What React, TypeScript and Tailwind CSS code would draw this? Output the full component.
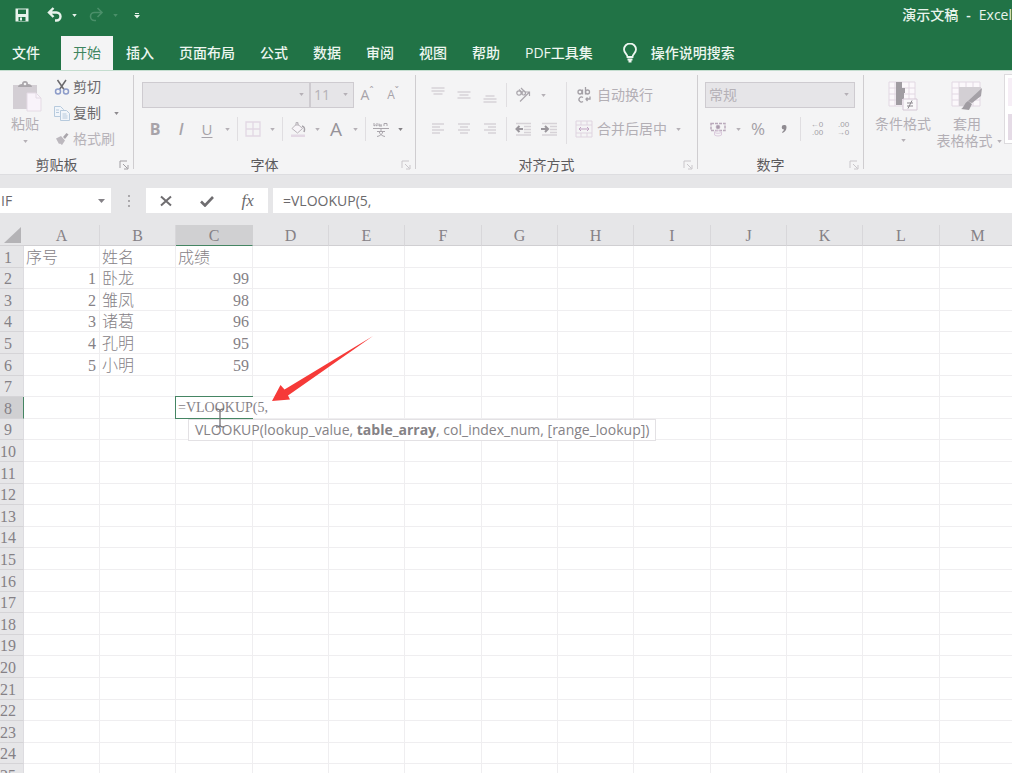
import React, { useState } from 'react';
import clsx from 'clsx';

const TABS = ['开始', '插入', '页面布局', '公式', '数据', '审阅', '视图', '帮助', 'PDF工具集'];
const COLUMNS = 'ABCDEFGHIJKLM'.split('');
const ROWS = Array.from({ length: 25 }, (_, i) => i + 1);

const DATA: Record<number, string[]> = {
    1: ['序号', '姓名', '成绩'],
    2: ['1', '卧龙', '99'],
    3: ['2', '雏凤', '98'],
    4: ['3', '诸葛', '96'],
    5: ['4', '孔明', '95'],
    6: ['5', '小明', '59'],
};

const ACTIVE_ROW = 8;
const ACTIVE_COL = 'C';

function Caret({ className = 'text-[#b5b0b6]' }: { className?: string }) {
    return (
        <svg viewBox="0 0 6 4" className={clsx('h-[3px] w-[5px] shrink-0', className)} fill="currentColor">
            <path d="M0 0h6L3 4z" />
        </svg>
    );
}

function Drop({ label, className }: { label: string; className?: string }) {
    return (
        <button aria-label={label} className="flex h-[26px] w-[14px] items-center justify-center">
            <Caret className={className} />
        </button>
    );
}

function Tool({ label, wide = true, children }: { label: string; wide?: boolean; children: React.ReactNode }) {
    return (
        <button aria-label={label} className={clsx('flex h-[26px] items-center justify-center', wide ? 'w-[26px]' : 'w-6')}>
            {children}
        </button>
    );
}

function Divider() {
    return <div className="mx-[3px] h-6 w-px bg-[#e0dee1]" />;
}

function Icon({ children, className = 'size-4 text-[#b9b4ba]', box = '0 0 16 16' }: { children: React.ReactNode; className?: string; box?: string }) {
    return (
        <svg viewBox={box} className={className} fill="none" stroke="currentColor" strokeWidth="1.3">
            {children}
        </svg>
    );
}

function Group({ name, width, dim, children }: { name: string; width: string; dim?: boolean; children: React.ReactNode }) {
    return (
        <section className={clsx('flex shrink-0 flex-col', width)}>
            <div className="h-[78px]">{children}</div>
            <div className="flex h-[22px] items-end">
                <h2 className="flex-1 pr-[6px] text-center leading-[18px] text-[#5c5a5d]">{name}</h2>
                <button aria-label={`${name}设置`} className="flex h-[18px] w-[14px] items-center">
                    <Icon className={clsx('size-[10px]', dim ? 'text-[#c9c6ca]' : 'text-[#a19ea2]')} box="0 0 10 10">
                        <path d="M1 8V1h7M4 4l4.500 4.500M9 5v4H5" strokeWidth="1" />
                    </Icon>
                </button>
            </div>
        </section>
    );
}

function GroupEdge() {
    return <div className="mt-px h-[94px] w-px shrink-0 bg-[#cfcdd0]" />;
}

function Combo({ label, value, width }: { label: string; value: string; width: string }) {
    return (
        <div className={clsx('relative', width)}>
            <select
                aria-label={label}
                defaultValue={value}
                className="block h-[26px] w-full appearance-none border border-[#cecbd0] bg-[#e6e5e8] pl-[3px] text-[14px] text-[#b5b1b7] outline-none"
            >
                <option>{value}</option>
            </select>
            <span className="pointer-events-none absolute top-[11px] right-[6px]">
                <Caret />
            </span>
        </div>
    );
}

function TitleBar() {
    return (
        <header className="flex h-[30px] items-center bg-[#217346] pl-[14px] text-[#e8f3ec]">
            <button aria-label="保存">
                <svg viewBox="0 0 16 16" className="size-4">
                    <path d="M1.500 1.500h13v13h-13z" fill="currentColor" />
                    <path d="M4 2.500h8v4.500H4zM4.500 10h7v4h-7z" fill="#217346" />
                    <path d="M6 10.500h2v3H6z" fill="currentColor" />
                </svg>
            </button>
            <button aria-label="撤消" className="ml-[17px]">
                <svg viewBox="0 0 16 16" className="size-4" fill="none" stroke="currentColor" strokeWidth="2.400">
                    <path d="M6.500 1 2 5.500 6.500 10M2.500 5.500h7a4 4 0 0 1 0 8H8" />
                </svg>
            </button>
            <span className="ml-1"><Drop label="撤消列表" className="text-[#e8f3ec]" /></span>
            <button aria-label="恢复" className="ml-[7px]">
                <svg viewBox="0 0 16 16" className="size-4 text-[#4a8f69]" fill="none" stroke="currentColor" strokeWidth="1.600">
                    <path d="M9.500 1 14 5.500 9.500 10M13.500 5.500h-7a4 4 0 0 0 0 8H8" />
                </svg>
            </button>
            <span className="ml-1"><Drop label="恢复列表" className="text-[#4a8f69]" /></span>
            <button aria-label="自定义快速访问工具栏" className="ml-3">
                <svg viewBox="0 0 6 7" className="h-[7px] w-[6px]" fill="currentColor">
                    <path d="M1 1h4v1H1zM0 3h6L3 6.500z" />
                </svg>
            </button>
            <h1 className="ml-auto flex font-semibold">
                <span className="font-medium">演示文稿</span> <span className="mx-2">-</span> <span className="font-medium">Excel</span>
            </h1>
        </header>
    );
}

function TabBar() {
    const [active, setActive] = useState('开始');

    return (
        <nav className="flex h-10 items-end gap-px bg-[#217346] font-medium text-[#edf6f0]">
            <button className="h-[34px] w-[60px] pl-3 text-left">文件</button>
            {TABS.map((tab) => (
                <button
                    key={tab}
                    onClick={() => setActive(tab)}
                    className={clsx('h-[34px] shrink-0 px-3 whitespace-nowrap', tab === active && 'bg-[#f4f4f5] font-normal text-[#3f8560]')}
                >
                    {tab}
                </button>
            ))}
            <button className="flex h-[34px] shrink-0 items-center gap-[13px] pl-4 whitespace-nowrap">
                <svg viewBox="0 0 16 20" className="h-5 w-4" fill="none" stroke="currentColor" strokeWidth="1.800">
                    <path d="M5.500 14c0-3-3.500-4-3.500-7.500a6 6 0 0 1 12 0C14 10 10.500 11 10.500 14z" />
                    <path d="M5.500 16.500h5M6.500 18.500h3" />
                </svg>
                操作说明搜索
            </button>
        </nav>
    );
}

function ClipboardGroup() {
    return (
        <Group name="剪贴板" width="w-[133px]">
            <div className="flex">
                <button className="flex w-[50px] flex-col items-center pt-[6px] text-[#b3afb5]">
                    <svg viewBox="0 0 30 32" className="ml-1 h-8 w-[30px]">
                        <path d="M1 5h24v24H1z" fill="#d3ced4" />
                        <path d="M6 7c0-2 2-3 4-3a3 3 0 0 1 6 0c2 0 4 1 4 3z" fill="#aaa6ab" />
                        <circle cx="13" cy="4" r="1.300" fill="#f4f4f5" />
                        <path d="M15 13h9l5 5v13H15z" fill="#f9f3fa" stroke="#e4dbe5" />
                        <path d="M24 13v5h5" fill="none" stroke="#e4dbe5" />
                    </svg>
                    <span className="mb-1 leading-6">粘贴</span>
                    <Caret />
                </button>
                <div className="flex flex-col pl-1 text-[#6a686b]">
                    <button className="flex h-[26px] items-center gap-[3px]">
                        <svg viewBox="0 0 16 16" className="size-4" fill="none" strokeWidth="1.500">
                            <path d="M3.500 1 10 10.500M12 1 5.500 10.500" stroke="#6b696c" />
                            <circle cx="4" cy="12.500" r="2.500" stroke="#8d9cc9" />
                            <circle cx="12" cy="12.500" r="2.500" stroke="#8d9cc9" />
                        </svg>
                        剪切
                    </button>
                    <div className="flex h-[26px]">
                        <button className="flex items-center gap-[3px]">
                            <svg viewBox="0 0 16 16" className="size-4" fill="#f1f5fa" stroke="#b7cadd">
                                <path d="M.5 1.500h6l3 3v7h-9z" />
                                <path d="M6.500 5.500h6l3 3v7h-9z" />
                                <path d="M2 5h3M2 7.500h3M8.500 9h4M8.500 11h5M8.500 13h5" />
                            </svg>
                            复制
                        </button>
                        <span className="ml-2">
                            <Drop label="复制选项" className="text-[#8d8a8e]" />
                        </span>
                    </div>
                    <button className="flex h-[26px] items-center gap-[3px] text-[#b7b3b9]">
                        <svg viewBox="0 0 16 16" className="size-4" fill="#bcb8be">
                            <path d="M2 7.500 7 5l4 4.500-3 4.500-2-1.500-1 .5z" />
                            <path d="m9 6 3.500-4 2 1.500L11 8z" fill="#a9a5ab" />
                        </svg>
                        格式刷
                    </button>
                </div>
            </div>
        </Group>
    );
}

function FontGroup() {
    return (
        <Group name="字体" width="w-[281px]" dim>
            <div className="flex flex-col gap-2 pt-2 pl-2 text-[#a7a3a9]">
                <div className="flex">
                    <Combo label="字体名称" value="" width="w-[168px]" />
                    <Combo label="字号" value="11" width="w-[44px]" />
                    <Tool label="增大字号">
                        <span className="text-[14px]">A</span>
                        <span className="mb-2 text-[10px]">ˆ</span>
                    </Tool>
                    <Tool label="减小字号">
                        <span className="text-[12px]">A</span>
                        <span className="mb-2 text-[10px]">ˇ</span>
                    </Tool>
                </div>
                <div className="flex items-center">
                    <Tool label="加粗"><span className="text-[16px] font-bold">B</span></Tool>
                    <Tool label="倾斜"><span className="text-[16px] font-semibold italic">I</span></Tool>
                    <Tool label="下划线"><span className="text-[15px] font-medium underline underline-offset-2">U</span></Tool>
                    <Drop label="下划线样式" />
                    <Divider />
                    <Tool label="边框" wide={false}>
                        <Icon className="size-4 text-[#e2d8e3]"><path d="M1 1h14v14H1zM8 1v14M1 8h14" /></Icon>
                    </Tool>
                    <Drop label="边框样式" />
                    <Divider />
                    <Tool label="填充颜色" wide={false}>
                        <svg viewBox="0 0 16 16" className="size-4">
                            <path d="m2 7.500 5-5 5.500 5-5 4.500z" fill="#f8f5f9" stroke="#b9b4ba" />
                            <path d="M6 5V1.500h2V5" fill="none" stroke="#b9b4ba" />
                            <path d="M12 5c3 1 3 3 2 6" fill="none" stroke="#a7a3a9" strokeWidth="1.500" />
                            <path d="M1 13.500h14V16H1z" fill="#e3d8e4" />
                        </svg>
                    </Tool>
                    <Drop label="选择填充颜色" />
                    <Tool label="字体颜色" wide={false}><span className="text-[19px] font-medium text-[#979399]">A</span></Tool>
                    <Drop label="选择字体颜色" />
                    <Divider />
                    <Tool label="拼音" wide={false}>
                        <svg viewBox="0 0 16 16" className="size-4" fill="none" stroke="#aaa6ac">
                            <path d="M1 2v3l1.500-1L4 5V2M6 4h3M6 2.500v2.500h3M11 5V2.500h3V5M0 7.500h16" />
                            <path d="M8 8v2M4 10.500h8M6 10.500c1 3 3 4.500 6 5M10 10.500c-1 3-3 4.500-6 5" />
                        </svg>
                    </Tool>
                    <Drop label="拼音选项" className="text-[#838084]" />
                </div>
            </div>
        </Group>
    );
}

function AlignGroup() {
    return (
        <Group name="对齐方式" width="w-[281px]" dim>
            <div className="flex pt-2 pl-[9px] text-[#b3afb5]">
                <div className="flex flex-col gap-2">
                    <div className="flex items-center">
                        <Tool label="顶端对齐"><Icon className="size-4 text-[#d6d2d7]"><path d="M1.500 1h13M1.500 4h13M3.500 7h9" /></Icon></Tool>
                        <Tool label="垂直居中"><Icon className="size-4 text-[#d6d2d7]"><path d="M1.500 5h13M3.500 8h9M1.500 11h13" /></Icon></Tool>
                        <Tool label="底端对齐"><Icon className="size-4 text-[#d6d2d7]"><path d="M3.500 9h9M1.500 12h13M1.500 15h13" /></Icon></Tool>
                        <Divider />
                        <Tool label="方向">
                            <svg viewBox="0 0 16 16" className="size-4" fill="none" stroke="#aaa6ac" strokeWidth="1.200">
                                <circle cx="4" cy="6" r="2.200" />
                                <path d="m4 2.500 4 4M6 1l4 4" />
                                <circle cx="8.500" cy="6" r="2" />
                                <path d="M5 14.500 14.500 5M10.500 5h4v4" />
                            </svg>
                        </Tool>
                        <Drop label="方向选项" />
                    </div>
                    <div className="flex items-center">
                        <Tool label="左对齐"><Icon className="size-4 text-[#d6d2d7]"><path d="M2 3h12M2 6h8M2 9h12M2 12h8" /></Icon></Tool>
                        <Tool label="居中"><Icon className="size-4 text-[#d6d2d7]"><path d="M2 3h12M4 6h8M2 9h12M4 12h8" /></Icon></Tool>
                        <Tool label="右对齐"><Icon className="size-4 text-[#d6d2d7]"><path d="M2 3h12M6 6h8M2 9h12M6 12h8" /></Icon></Tool>
                        <Divider />
                        <Tool label="减少缩进量">
                            <Icon className="size-4 text-[#d6d2d7]">
                                <path d="M1 2.500h15M9 5.500h7M9 8.500h7M9 11.500h7M1 14h15" />
                                <path d="M8 8H2M4.500 5 1.500 8l3 3" stroke="#9a969c" strokeWidth="2" />
                            </Icon>
                        </Tool>
                        <Tool label="增加缩进量">
                            <Icon className="size-4 text-[#d6d2d7]">
                                <path d="M1 2.500h15M9 5.500h7M9 8.500h7M9 11.500h7M1 14h15" />
                                <path d="M0 8h6M4 5l3 3-3 3" stroke="#9a969c" strokeWidth="2" />
                            </Icon>
                        </Tool>
                    </div>
                </div>
                <div className="mx-1 h-[62px] w-px bg-[#e0dee1]" />
                <div className="flex flex-col gap-2">
                    <button className="flex h-[26px] items-center gap-1 pl-1">
                        <Icon className="size-[18px] text-[#a39fa5]" box="0 0 18 18">
                            <circle cx="5" cy="6" r="2" />
                            <path d="M7.500 3.500v5M10.500 1v7.500" />
                            <circle cx="12.500" cy="6" r="2" />
                            <path d="M8 11.500a2.500 2.500 0 1 0 0 4M15 10.500V13h-4M12.500 11.500 11 13l1.500 2" />
                        </Icon>
                        自动换行
                    </button>
                    <div className="flex">
                        <button className="flex h-[26px] items-center gap-1 pl-1">
                            <Icon className="size-[18px] text-[#dfd4e0]" box="0 0 18 18">
                                <path d="M1 1h16v16H1zM1 5h16M1 13h16M6 1v4M12 1v4M6 13v4M12 13v4" strokeWidth="1" />
                                <path d="M4 9h10M6 7 4 9l2 2M12 7l2 2-2 2" stroke="#c0a3c2" strokeWidth="1" />
                            </Icon>
                            合并后居中
                        </button>
                        <span className="ml-1"><Drop label="合并选项" /></span>
                    </div>
                </div>
            </div>
        </Group>
    );
}

function NumberGroup() {
    return (
        <Group name="数字" width="w-[165px]" dim>
            <div className="flex flex-col gap-2 pt-2 pl-[7px] text-[#a39fa5]">
                <Combo label="数字格式" value="常规" width="w-[150px]" />
                <div className="flex items-center">
                    <Tool label="会计数字格式">
                        <svg viewBox="0 0 16 16" className="size-4" fill="none" stroke="#b9a9bb">
                            <path d="M1 2.500h14v7H1z" strokeDasharray="3 1" strokeWidth="1.500" />
                            <circle cx="8" cy="6" r="1.800" fill="#a99bab" />
                            <ellipse cx="8" cy="11" rx="3.500" ry="1.300" stroke="#dccbde" />
                            <path d="M4.500 11v3c2 1.300 5 1.300 7 0v-3" stroke="#dccbde" />
                        </svg>
                    </Tool>
                    <Drop label="货币选项" />
                    <Tool label="百分比样式"><span className="text-[17px]">%</span></Tool>
                    <Tool label="千位分隔样式">
                        <svg viewBox="0 0 6 8" className="h-2 w-[6px]" fill="#8f8b91">
                            <path d="M3 0a2.300 2.300 0 0 1 2.500 2.500C5.500 5 4 7 1.500 8L1 7c1.200-.6 1.800-1.400 2-2.400A2.300 2.300 0 0 1 3 0z" />
                        </svg>
                    </Tool>
                    <Divider />
                    <Tool label="增加小数位数">
                        <span className="flex flex-col text-right font-['Liberation_Sans',sans-serif] text-[8px] leading-[8px]"><span>←0</span><span>.00</span></span>
                    </Tool>
                    <Tool label="减少小数位数">
                        <span className="flex flex-col text-right font-['Liberation_Sans',sans-serif] text-[8px] leading-[8px]"><span>.00</span><span>→0</span></span>
                    </Tool>
                </div>
            </div>
        </Group>
    );
}

function StylesGroup() {
    return (
        <section className="flex min-w-0 flex-1 overflow-hidden pl-[7px] text-[#b3afb5]">
            <button className="flex w-16 shrink-0 flex-col items-center pt-[7px]">
                <svg viewBox="0 0 30 30" className="size-[30px]">
                    <path d="M1 1h26v24H1zM1 7h26M1 13h26M1 19h26M7 1v24M21 1v24" fill="#fbf8fb" stroke="#e2d8e3" />
                    <path d="M8 1h6v6h3v5h-1v6h-2v6H8z" fill="#a09ca2" />
                    <path d="M15 18h14v11H15z" fill="#faf8fa" stroke="#d4c7d5" />
                    <path d="M19 22h6M19 25h6M24 19.500l-4 8" stroke="#8d898f" />
                </svg>
                <span className="mb-[2px] leading-[26px]">条件格式</span>
                <Caret />
            </button>
            <button className="flex w-16 shrink-0 flex-col items-center pt-[7px]">
                <svg viewBox="0 0 32 30" className="h-[30px] w-8">
                    <path d="M1 1h28v24H1zM1 7h28M1 13h28M1 19h28M8 1v24M15 1v24M22 1v24" fill="#fbf8fb" stroke="#e2d8e3" />
                    <path d="M8 6h22v8L17 25H8z" fill="#d3cfd4" />
                    <path d="m31 7-1 8-9 7-4-2z" fill="#a5a1a7" />
                    <path d="m17 20 4 3-3 6-8-1c3-1 3-6 7-8z" fill="#a09ca2" />
                </svg>
                <span className="leading-[26px]">套用</span>
                <span className="flex items-center gap-1 pl-1 leading-2 whitespace-nowrap">表格格式 <Caret /></span>
            </button>
            <div className="ml-[5px] flex h-[70px] w-[240px] shrink-0 flex-col justify-between border border-[#dddbde] bg-white py-[3px] pl-[3px]">
                <div className="h-7 bg-[#f6eef6]" />
                <div className="h-[26px] bg-[#e5dbe6]" />
            </div>
        </section>
    );
}

function FormulaBar({ value, onChange }: { value: string; onChange: (v: string) => void }) {
    return (
        <div className="flex h-[51px] shrink-0 items-start border-t border-[#dddde0] bg-[#e6e6e8] pt-[13px] text-[#6b696c]">
            <div className="flex h-[25px] w-[111px] bg-white">
                <input aria-label="名称框" defaultValue="IF" className="min-w-0 flex-1 pl-px outline-none" />
                <button aria-label="名称列表" className="flex w-5 items-center justify-center">
                    <svg viewBox="0 0 7 4" className="h-1 w-[7px]" fill="#858287"><path d="M0 0h7L3.500 4z" /></svg>
                </button>
            </div>
            <div className="flex h-[25px] w-[35px] flex-col items-center justify-center gap-[3px]">
                <span className="size-[2px] bg-[#aaa8ab]" />
                <span className="size-[2px] bg-[#aaa8ab]" />
                <span className="size-[2px] bg-[#aaa8ab]" />
            </div>
            <div className="flex h-[25px] w-[122px] items-center justify-around bg-white">
                <button aria-label="取消" className="flex w-10 justify-center">
                    <Icon className="h-3 w-3 text-[#6f6d70]" box="0 0 12 12"><path d="m1 1.500 10 9M11 1.500l-10 9" strokeWidth="2" /></Icon>
                </button>
                <button aria-label="输入" className="flex w-10 justify-center">
                    <Icon className="h-3 w-[14px] text-[#6f6d70]" box="0 0 14 12"><path d="m1 6.500 4 4L13 2" strokeWidth="2.600" /></Icon>
                </button>
                <button aria-label="插入函数" className="w-10 font-['Liberation_Serif',serif] text-[17px] leading-5 italic">fx</button>
            </div>
            <input
                aria-label="编辑栏"
                value={value}
                onChange={(e) => onChange(e.target.value)}
                className="ml-[5px] h-[25px] min-w-0 flex-1 bg-white pl-[10px] outline-none"
            />
        </div>
    );
}

function ActiveCell({ value, onChange }: { value: string; onChange: (v: string) => void }) {
    return (
        <>
            <div className="absolute -top-px -left-px z-10 h-[23px] w-[78px] border border-r-0 border-[#458563] bg-white" />
            <input
                aria-label="C8"
                value={value}
                onChange={(e) => onChange(e.target.value)}
                className="absolute top-[2px] left-px z-20 h-[18px] w-[94px] pl-px text-[14px] outline-none"
            />
            <div className="absolute top-[22px] left-3 z-10 border border-[#e3e1e4] bg-white px-[6px] font-['Open_Sans',sans-serif] text-[14px] leading-5 font-normal whitespace-nowrap text-[#858286]">
                VLOOKUP(lookup_value, <b>table_array</b>, col_index_num, [range_lookup])
            </div>
            {/* text cursor */}
            <svg viewBox="0 0 12 20" className="absolute top-[11px] left-[38px] z-30 h-5 w-3" fill="none" stroke="#777478" strokeWidth="1.300">
                <path d="M2 1c2 0 4 .5 4 2 0-1.500 2-2 4-2M6 3v14M2 19c2 0 4-.5 4-2 0 1.500 2 2 4 2" />
            </svg>
            <svg viewBox="0 0 102 67" className="absolute -top-[62px] left-[95px] z-30 h-[67px] w-[102px]" fill="#f63a38">
                <path d="M1 66 9.500 50l4 4.500L102 1 17 60.500l2 4z" />
            </svg>
        </>
    );
}

function Sheet({ value, onChange }: { value: string; onChange: (v: string) => void }) {
    return (
        <div className="min-h-0 flex-1 overflow-hidden bg-white">
            <table className="border-separate border-spacing-0 font-['Liberation_Serif','Noto_Sans_CJK_SC',serif] text-[16px] leading-[18px] text-[#858186]">
                <thead>
                    <tr className="h-[21px] bg-[#e6e6e8]">
                        <th aria-label="全选" className="w-6 min-w-6 border-b border-[#d3d2d5] p-0">
                            <svg viewBox="0 0 24 20" className="h-5 w-6" fill="#b4b3b6">
                                <path d="M21 2v16H4z" />
                            </svg>
                        </th>
                        {COLUMNS.map((col, i) => (
                            <th
                                key={col}
                                scope="col"
                                className={clsx(
                                    'border-r border-b px-0 pt-[2px] pb-0 font-normal',
                                    i % 3 === 2 ? 'w-[77px] min-w-[77px]' : 'w-[76px] min-w-[76px]',
                                    col === ACTIVE_COL ? 'border-r-[#d0d0d2] border-b-[#458563] bg-[#d0d0d2]' : 'border-r-[#d8d7da] border-b-[#d0cfd2]'
                                )}
                            >
                                {col}
                            </th>
                        ))}
                    </tr>
                </thead>
                <tbody>
                    {ROWS.map((row) => (
                        <tr key={row} className={row % 5 === 2 || row % 5 === 4 ? 'h-[21px]' : 'h-[22px]'}>
                            <th
                                scope="row"
                                className={clsx(
                                    'border-r border-b border-b-[#d5d4d7] pt-[2px] pr-[7px] pb-0 pl-0 font-normal',
                                    row === ACTIVE_ROW ? 'border-r-[#458563] bg-[#d0d0d2]' : 'border-r-[#dddce0] bg-[#e6e6e8]'
                                )}
                            >
                                {row}
                            </th>
                            {COLUMNS.map((col, i) => {
                                const text = DATA[row]?.[i] ?? '';
                                const isActive = row === ACTIVE_ROW && col === ACTIVE_COL;
                                return (
                                    <td
                                        key={col}
                                        className={clsx(
                                            'border-r border-b border-[#efeef0] pt-[2px] pr-[3px] pb-0 pl-[2px] font-light',
                                            isActive && 'relative',
                                            /^\d+$/.test(text) ? 'text-right' : 'text-left'
                                        )}
                                    >
                                        {isActive ? <ActiveCell value={value} onChange={onChange} /> : text}
                                    </td>
                                );
                            })}
                        </tr>
                    ))}
                </tbody>
            </table>
        </div>
    );
}

export default function App() {
    const [formula, setFormula] = useState('=VLOOKUP(5,');

    return (
        <div className="flex h-screen flex-col overflow-hidden bg-white font-['Open_Sans','Noto_Sans_CJK_SC',sans-serif] text-[14px] leading-5">
            <TitleBar />
            <TabBar />
            <div className="flex h-[104px] shrink-0 border-t border-[#c4ddcf] bg-[#f4f4f5] pt-[3px]">
                <ClipboardGroup />
                <GroupEdge />
                <FontGroup />
                <GroupEdge />
                <AlignGroup />
                <GroupEdge />
                <NumberGroup />
                <GroupEdge />
                <StylesGroup />
            </div>
            <FormulaBar value={formula} onChange={setFormula} />
            <Sheet value={formula} onChange={setFormula} />
        </div>
    );
}
